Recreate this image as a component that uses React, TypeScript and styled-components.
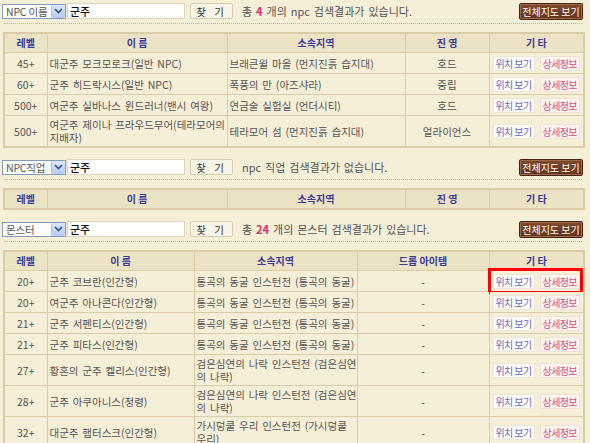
import React from "react";
import styled, { createGlobalStyle } from "styled-components";

const GlobalStyle = createGlobalStyle`
  body {
    margin: 0;
    background: #f5efd8;
    font-family: "Noto Sans CJK KR", "Noto Sans", sans-serif;
    font-size: 11px;
    color: #4d4d4d;
  }
`;

interface IColumn {
  label: string;
  width: number;
}

interface IRow {
  level: string;
  name: string;
  region: string;
  extra: string;
  highlight?: boolean;
}

const npcColumns: IColumn[] = [
  { label: "레벨", width: 43 },
  { label: "이 름", width: 180 },
  { label: "소속지역", width: 178 },
  { label: "진 영", width: 84 },
  { label: "기 타", width: 95 },
];

const mobColumns: IColumn[] = [
  { label: "레벨", width: 43 },
  { label: "이 름", width: 147 },
  { label: "소속지역", width: 163 },
  { label: "드롭 아이템", width: 132 },
  { label: "기 타", width: 95 },
];

const npcRows: IRow[] = [
  { level: "45+", name: "대군주 모크모로크(일반 NPC)", region: "브래큰윌 마을 (먼지진흙 습지대)", extra: "호드" },
  { level: "60+", name: "군주 히드락시스(일반 NPC)", region: "폭풍의 만 (아즈샤라)", extra: "중립" },
  { level: "500+", name: "여군주 실바나스 윈드러너(밴시 여왕)", region: "연금술 실험실 (언더시티)", extra: "호드" },
  { level: "500+", name: "여군주 제이나 프라우드무어(테라모어의\n지배자)", region: "테라모어 섬 (먼지진흙 습지대)", extra: "얼라이언스" },
];

const mobRows: IRow[] = [
  { level: "20+", name: "군주 코브란(인간형)", region: "통곡의 동굴 인스턴전 (통곡의 동굴)", extra: "-", highlight: true },
  { level: "20+", name: "여군주 아나콘다(인간형)", region: "통곡의 동굴 인스턴전 (통곡의 동굴)", extra: "-" },
  { level: "21+", name: "군주 서펜티스(인간형)", region: "통곡의 동굴 인스턴전 (통곡의 동굴)", extra: "-" },
  { level: "21+", name: "군주 피타스(인간형)", region: "통곡의 동굴 인스턴전 (통곡의 동굴)", extra: "-" },
  { level: "27+", name: "황혼의 군주 켈리스(인간형)", region: "검은심연의 나락 인스턴전 (검은심연\n의 나락)", extra: "-" },
  { level: "28+", name: "군주 아쿠아니스(정령)", region: "검은심연의 나락 인스턴전 (검은심연\n의 나락)", extra: "-" },
  { level: "32+", name: "대군주 햄터스크(인간형)", region: "가시덩쿨 우리 인스턴전 (가시덩쿨\n우리)", extra: "-" },
];

function SearchBar({ kind, result }: { kind: string; result: React.ReactNode }) {
  return (
    <Bar>
      <SelectBox>
        <SelectText>{kind}</SelectText>
        <SelectArrow>
          <svg width="9" height="6" viewBox="0 0 9 6">
            <path d="M1 1 L4.5 4.5 L8 1" fill="none" stroke="#2f4f8f" strokeWidth="1.6" />
          </svg>
        </SelectArrow>
      </SelectBox>
      <QueryInput defaultValue="군주" />
      <FindButton>찾 기</FindButton>
      <ResultText>{result}</ResultText>
      <MapButton>전체지도 보기</MapButton>
    </Bar>
  );
}

function ResultTable({ columns, rows }: { columns: IColumn[]; rows: IRow[] }) {
  return (
    <Table>
      <colgroup>
        {columns.map((c) => (
          <col key={c.label} style={{ width: c.width }} />
        ))}
      </colgroup>
      <thead>
        <tr>
          {columns.map((c) => (
            <HeadCell key={c.label}>{c.label}</HeadCell>
          ))}
        </tr>
      </thead>
      <tbody>
        {rows.map((r, i) => (
          <tr key={i}>
            <Cell $align="center">{r.level}</Cell>
            <Cell $align="left">{r.name}</Cell>
            <Cell $align="left">{r.region}</Cell>
            <Cell $align="center">{r.extra}</Cell>
            <Cell $align="center" $highlight={r.highlight}>
              <ActionBox>
                <SmallButton $tone="blue">위치 보기</SmallButton>
                <SmallButton $tone="pink">상세정보</SmallButton>
              </ActionBox>
            </Cell>
          </tr>
        ))}
      </tbody>
    </Table>
  );
}

function App() {
  return (
    <Page>
      <GlobalStyle />
      <Section>
        <SearchBar
          kind="NPC 이름"
          result={
            <>
              총 <Count>4</Count> 개의 npc 검색결과가 있습니다.
            </>
          }
        />
        <Dotted />
        <ResultTable columns={npcColumns} rows={npcRows} />
      </Section>
      <Section>
        <SearchBar kind="NPC직업" result="npc 직업 검색결과가 없습니다." />
        <Dotted />
        <ResultTable columns={npcColumns} rows={[]} />
      </Section>
      <Section>
        <SearchBar
          kind="몬스터"
          result={
            <>
              총 <Count>24</Count> 개의 몬스터 검색결과가 있습니다.
            </>
          }
        />
        <Dotted />
        <ResultTable columns={mobColumns} rows={mobRows} />
      </Section>
    </Page>
  );
}

export default App;

const Page = styled.div`
  width: 590px;
  padding: 3px 0 0 2px;
  box-sizing: border-box;
  display: flex;
  flex-direction: column;
  gap: 11px;
`;

const Section = styled.div`
  display: flex;
  flex-direction: column;
`;

const Bar = styled.div`
  width: 581px;
  height: 16px;
  display: flex;
  align-items: center;
`;

const SelectBox = styled.div`
  width: 64px;
  height: 15px;
  box-sizing: border-box;
  border: 1px solid #7f9db9;
  background: #fff;
  display: flex;
  align-items: center;
  justify-content: space-between;
`;

const SelectText = styled.span`
  padding-left: 3px;
  font-size: 10.5px;
  line-height: 13px;
  color: #555;
  white-space: nowrap;
  letter-spacing: -0.2px;
`;

const SelectArrow = styled.span`
  width: 13px;
  height: 13px;
  border-radius: 2px;
  background: linear-gradient(#dbe6fb, #b7cbf3);
  border-left: 1px solid #a9bee8;
  display: flex;
  align-items: center;
  justify-content: center;
`;

const QueryInput = styled.input`
  width: 118px;
  height: 16px;
  box-sizing: border-box;
  margin-left: 1px;
  padding: 0 2px;
  border: 1px solid #ddd5bd;
  background: #fffefa;
  font-family: inherit;
  font-size: 11px;
  font-weight: 500;
  color: #111;
  outline: none;
`;

const FindButton = styled.div`
  width: 43px;
  height: 16px;
  box-sizing: border-box;
  margin-left: 5px;
  border: 1px solid #d6ceb4;
  border-radius: 2px;
  background: #f8f4e6;
  color: #333;
  font-size: 10.5px;
  letter-spacing: 3px;
  display: flex;
  align-items: center;
  justify-content: center;
`;

const ResultText = styled.div`
  flex: 1;
  margin-left: 9px;
  color: #555;
  font-size: 11px;
  word-spacing: 1.5px;
  white-space: nowrap;
`;

const Count = styled.b`
  color: #d0306a;
`;

const MapButton = styled.div`
  width: 64px;
  height: 17px;
  box-sizing: border-box;
  border: 1px solid #4a2410;
  border-radius: 2px;
  background: linear-gradient(#7f4a2a, #61321a);
  box-shadow: inset 0 0 0 1px #9a6a4a;
  color: #fff;
  font-size: 10px;
  display: flex;
  align-items: center;
  justify-content: center;
  white-space: nowrap;
`;

const Dotted = styled.div`
  width: 578px;
  margin: 4px 0 8px 2px;
  border-top: 1px dotted #c4b48c;
`;

const Table = styled.table`
  width: 580px;
  margin-left: 1px;
  table-layout: fixed;
  border-collapse: collapse;
  border: 2px solid #dacca6;
`;

const HeadCell = styled.th`
  height: 18px;
  padding: 0;
  background: #ece2c4;
  border: 1px solid #dacca6;
  color: #3a3a9c;
  font-size: 10px;
  line-height: 14px;
  font-weight: bold;
  text-align: center;
  white-space: pre;
`;

const Cell = styled.td<{ $align: "left" | "center"; $highlight?: boolean }>`
  position: relative;
  height: 21px;
  padding: 2px 2px;
  box-sizing: border-box;
  border: 1px solid #dacca6;
  background: #f5efd8;
  text-align: ${({ $align }) => $align};
  font-size: 10.5px;
  line-height: 13px;
  word-spacing: 1.5px;
  color: #555;
  white-space: pre;

  &::after {
    content: "";
    display: ${({ $highlight }) => ($highlight ? "block" : "none")};
    position: absolute;
    inset: -3px 0 -3px -2px;
    border: 3px solid #f00;
  }
`;

const ActionBox = styled.div`
  display: flex;
  justify-content: center;
  gap: 5px;
  word-spacing: 0;
`;

const SmallButton = styled.span<{ $tone: "blue" | "pink" }>`
  height: 15px;
  padding: 0 2px;
  box-sizing: border-box;
  border: 1px solid ${({ $tone }) => ($tone === "blue" ? "#ebe6d6" : "#f0e0d6")};
  background: ${({ $tone }) => ($tone === "blue" ? "#fdfcf6" : "#fdf5ee")};
  color: ${({ $tone }) => ($tone === "blue" ? "#6a6ac0" : "#d0508c")};
  font-size: 10px;
  line-height: 13px;
  letter-spacing: -0.6px;
  white-space: nowrap;
`;
